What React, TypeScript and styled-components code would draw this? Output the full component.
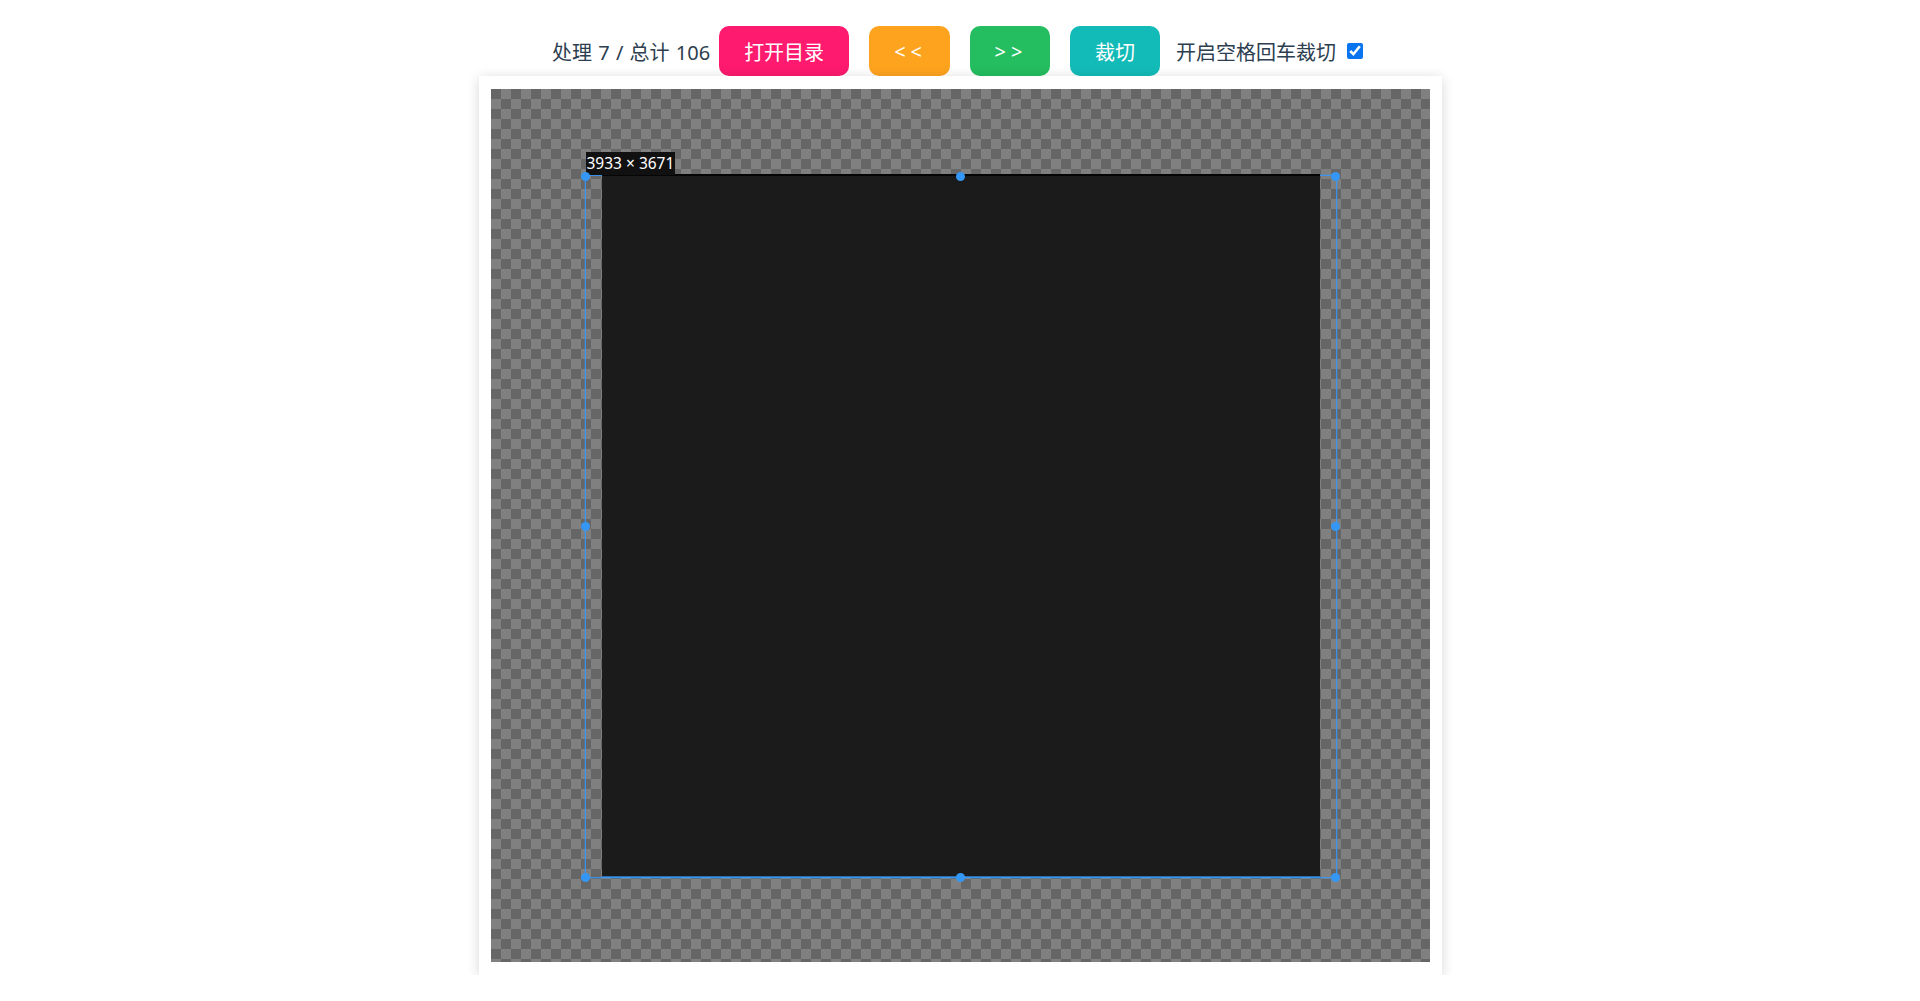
import React, { useState } from "react";
import styled, { createGlobalStyle } from "styled-components";

const GlobalStyle = createGlobalStyle`
  html, body {
    margin: 0;
    padding: 0;
    background: #fff;
  }
  body {
    font-family: "Noto Sans", "Noto Sans CJK SC", sans-serif;
    color: #2c3e50;
  }
`;

const Page = styled.div`
  display: flex;
  flex-direction: column;
  align-items: center;
  padding-top: 26px;
`;

const Toolbar = styled.div`
  display: flex;
  align-items: center;
  height: 50px;
  margin-right: 5px;
  font-size: 20px;
`;

const Counter = styled.span`
  white-space: nowrap;
  word-spacing: 1px;
  margin-right: -1px;
`;

const Button = styled.button<{ $bg: string }>`
  height: 50px;
  padding: 0 25px;
  margin: 0 10px;
  border: none;
  border-radius: 10px;
  background: ${(p) => p.$bg};
  color: #fff;
  font-family: inherit;
  font-size: 20px;
  cursor: pointer;
`;

const Arrow = styled.span`
  letter-spacing: 5px;
  margin-right: -2.5px;
`;

const SwitchLabel = styled.label`
  display: flex;
  align-items: center;
  margin-left: 6px;
  white-space: nowrap;
`;

const Check = styled.input`
  width: 16px;
  height: 16px;
  margin: 0 0 1px 11px;
  accent-color: #0b75f0;
`;

const Card = styled.div`
  box-sizing: border-box;
  width: 963px;
  padding: 13px 12px;
  background: #fff;
  box-shadow: 0 2px 12px rgba(0, 0, 0, 0.16);
`;

// checkered backdrop under the modal, 10px squares
const Stage = styled.div`
  position: relative;
  width: 939px;
  height: 873px;
  background: repeating-conic-gradient(#808080 0 25%, #666 0 50%) 0 0 / 20px 20px;
  overflow: hidden;
`;

const CropBox = styled.div`
  position: absolute;
  left: 95px;
  top: 87px;
  width: 750px;
  height: 701px;
  outline: 1px solid rgba(51, 153, 255, 0.8);
  box-shadow: 0 0 0 2px rgba(51, 153, 255, 0.25);
`;

const Picture = styled.div`
  position: absolute;
  left: 16px;
  right: 16px;
  top: -2px;
  bottom: 0;
  background: #1b1b1b;
  border-top: 2px solid #050505;
  border-bottom: 1px solid #2a6fb5;
`;

const SizeTag = styled.div`
  position: absolute;
  left: 0;
  bottom: 100%;
  margin-bottom: 1px;
  padding: 2px 1px 3px;
  background: #111;
  color: #fff;
  font-family: "Noto Sans", "Liberation Sans", sans-serif;
  font-size: 15.5px;
  line-height: 18px;
  white-space: nowrap;
`;

const Point = styled.span`
  position: absolute;
  width: 9px;
  height: 9px;
  margin: -4.5px 0 0 -4.5px;
  border-radius: 50%;
  background: #3597f5;
`;

const points = [
  [0, 0],
  [50, 0],
  [100, 0],
  [0, 50],
  [100, 50],
  [0, 100],
  [50, 100],
  [100, 100],
];

export default function App() {
  const [crossKeys, setCrossKeys] = useState(true);
  const index = 7;
  const total = 106;

  return (
    <>
      <GlobalStyle />
      <Page>
        <Toolbar>
          <Counter>
            处理 {index} / 总计 {total}
          </Counter>
          <Button $bg="#fe1a6e">打开目录</Button>
          <Button $bg="#fea31e">
            <Arrow>{"<<"}</Arrow>
          </Button>
          <Button $bg="#24bd5f">
            <Arrow>{">>"}</Arrow>
          </Button>
          <Button $bg="#13bbb8">裁切</Button>
          <SwitchLabel>
            开启空格回车裁切
            <Check
              type="checkbox"
              checked={crossKeys}
              onChange={(e) => setCrossKeys(e.target.checked)}
            />
          </SwitchLabel>
        </Toolbar>
        <Card>
          <Stage>
            <CropBox>
              <Picture />
              <SizeTag>3933 × 3671</SizeTag>
              {points.map(([x, y]) => (
                <Point key={`${x}-${y}`} style={{ left: `${x}%`, top: `${y}%` }} />
              ))}
            </CropBox>
          </Stage>
        </Card>
      </Page>
    </>
  );
}
